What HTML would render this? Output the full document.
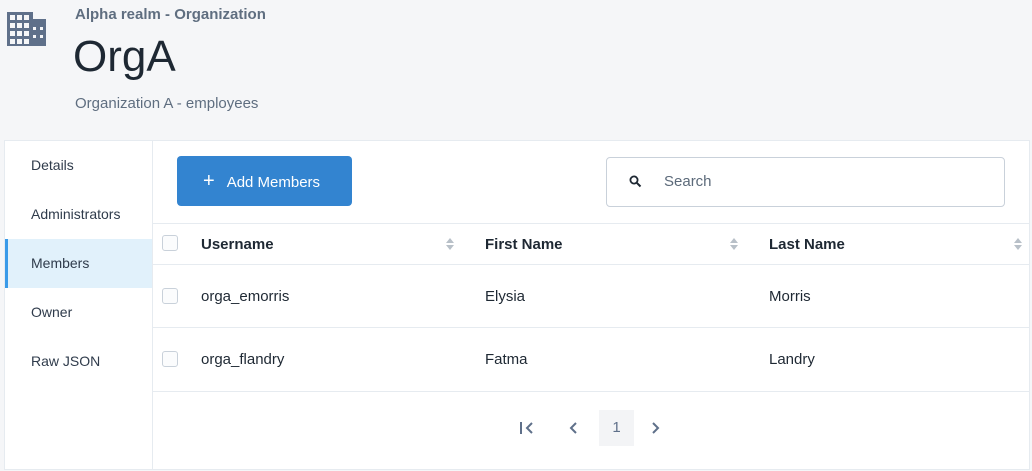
<!DOCTYPE html>
<html><head><style>
*{box-sizing:border-box;margin:0;padding:0}
body{width:1032px;height:466px;background:#f5f6f8;font-family:"Liberation Sans",sans-serif;color:#1e2833;position:relative;overflow:hidden}
.abs{position:absolute}
.card{position:absolute;left:4px;top:140px;width:1026px;height:330px;background:#fff;border:1px solid #e6ebf0}
.side{position:absolute;left:0;top:0;width:148px;height:100%;border-right:1px solid #e6ebf0}
.side div{height:49px;line-height:49px;padding-left:26px;font-size:14px;color:#2f3b4b}
.side .act{background:#e1f1fb;border-left:3px solid #3a9ae8;padding-left:23px}
.btn{position:absolute;left:172px;top:15px;width:175px;height:50px;background:#3384d0;border-radius:4px;color:#fff;font-size:15px;line-height:50px;padding-left:26px}
.search{position:absolute;left:601px;top:16px;width:399px;height:50px;border:1px solid #c9d1da;border-radius:4px;color:#5c6a7a;font-size:15px;line-height:48px;padding-left:57px}
.row{position:absolute;left:148px;right:0;border-top:1px solid #e6ebf0;font-size:14px;color:#1e2833}
.row span{position:absolute}
.cb{position:absolute;left:9px;width:16px;height:16px;border:1px solid #c9d1da;border-radius:3px;background:#fbfcfd}
.sort{position:absolute;width:10px;height:14px}
</style></head><body>
<svg class="abs" style="left:7px;top:12px" width="40" height="35" viewBox="0 0 40 35">
<path fill="#5f708a" d="M0 0H26V7H39V34H0Z"/>
<g fill="#f5f6f8">
<rect x="3" y="3" width="5" height="5"/><rect x="10" y="3" width="5" height="5"/><rect x="17" y="3" width="5" height="5"/>
<rect x="3" y="11" width="5" height="5"/><rect x="10" y="11" width="5" height="5"/><rect x="17" y="11" width="5" height="5"/>
<rect x="3" y="19" width="5" height="5"/><rect x="10" y="19" width="5" height="5"/><rect x="17" y="19" width="5" height="5"/>
<rect x="3" y="27" width="5" height="5"/><rect x="10" y="27" width="5" height="5"/><rect x="17" y="27" width="5" height="5"/>
<rect x="26" y="15" width="3" height="3"/><rect x="33" y="15" width="3" height="3"/>
<rect x="26" y="23" width="3" height="3"/><rect x="33" y="23" width="3" height="3"/>
</g></svg>
<div class="abs" style="left:75px;top:6px;font-size:15px;font-weight:bold;color:#5f6e80">Alpha realm - Organization</div>
<div class="abs" style="left:73px;top:32px;font-size:44px;font-weight:300;color:#1e2833">OrgA</div>
<div class="abs" style="left:75px;top:95px;font-size:15px;color:#5f6e80">Organization A - employees</div>
<div class="card">
<div class="side"><div>Details</div><div>Administrators</div><div class="act">Members</div><div>Owner</div><div>Raw JSON</div></div>
<div class="btn"><span style="font-size:20px;margin-right:12px">+</span>Add Members</div>
<div class="search"><svg class="abs" style="left:22px;top:17px" width="13" height="13" viewBox="0 0 13 13"><circle cx="5" cy="5" r="3.6" fill="none" stroke="#1e2833" stroke-width="1.8"/><path d="M7.8 7.8L11.5 11.5" stroke="#1e2833" stroke-width="2"/></svg>Search</div>
<div class="row" style="top:82px;height:41px;font-weight:bold;font-size:15px">
<div class="cb" style="top:11px"></div>
<span style="left:48px;top:12px">Username</span><svg class="sort" style="left:292px;top:13px"><path d="M5 1L9 6H1ZM5 13L9 8H1Z" fill="#b8c0c8"/></svg>
<span style="left:332px;top:12px">First Name</span><svg class="sort" style="left:576px;top:13px"><path d="M5 1L9 6H1ZM5 13L9 8H1Z" fill="#b8c0c8"/></svg>
<span style="left:616px;top:12px">Last Name</span><svg class="sort" style="left:860px;top:13px"><path d="M5 1L9 6H1ZM5 13L9 8H1Z" fill="#b8c0c8"/></svg>
</div>
<div class="row" style="top:123px;height:63px;font-size:15px">
<div class="cb" style="top:23px"></div>
<span style="left:48px;top:23px">orga_emorris</span><span style="left:332px;top:23px">Elysia</span><span style="left:616px;top:23px">Morris</span></div>
<div class="row" style="top:186px;height:64px;font-size:15px">
<div class="cb" style="top:23px"></div>
<span style="left:48px;top:23px">orga_flandry</span><span style="left:332px;top:23px">Fatma</span><span style="left:616px;top:23px">Landry</span></div>
<div class="row" style="top:250px;height:80px">
<svg class="abs" style="left:366px;top:29px" width="16" height="14"><path d="M2 1V13M13 2L8 7L13 12" fill="none" stroke="#5f708a" stroke-width="2"/></svg>
<svg class="abs" style="left:415px;top:29px" width="10" height="14"><path d="M8 2L3 7L8 12" fill="none" stroke="#5f708a" stroke-width="2"/></svg>
<div class="abs" style="left:446px;top:18px;width:35px;height:36px;background:#f3f4f6;text-align:center;line-height:36px;font-size:15px;color:#5f708a">1</div>
<svg class="abs" style="left:498px;top:29px" width="10" height="14"><path d="M2 2L7 7L2 12" fill="none" stroke="#5f708a" stroke-width="2"/></svg>
</div>
</div>
</body></html>
